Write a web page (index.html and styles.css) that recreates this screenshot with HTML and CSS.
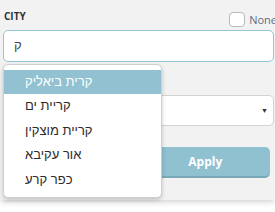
FILE: index.html
```html
<!DOCTYPE html>
<html>
<head>
<meta charset="utf-8">
<link rel="stylesheet" href="styles.css">
</head>
<body>
<div class="panel">
  <div class="header">
    <span class="label">CITY</span>
    <label class="none"><span class="box"></span><span class="none-text">None</span></label>
  </div>
  <div class="input">ק</div>
  <div class="spacer"></div>
  <div class="select"><span class="arrow">▼</span></div>
  <div class="buttons">
    <div class="btn"></div>
    <div class="btn">Apply</div>
  </div>
  <ul class="menu">
    <li class="item active">קרית ביאליק</li>
    <li class="item">קריית ים</li>
    <li class="item">קריית מוצקין</li>
    <li class="item">אור עקיבא</li>
    <li class="item">כפר קרע</li>
  </ul>
</div>
</body>
</html>
```
FILE: styles.css
```css
html, body { margin: 0; padding: 0; background: #ffffff; }
body { width: 275px; height: 212px; overflow: hidden; }
.panel {
  position: relative;
  background: #f2f2f2;
  height: 200px;
  box-sizing: border-box;
  padding: 12px 1px 0 3px;
  box-shadow: 0 2px 6px rgba(0,0,0,0.18);
  font-family: "Open Sans", "Liberation Sans", sans-serif;
}
.header {
  display: flex;
  justify-content: space-between;
  align-items: flex-start;
  height: 15px;
  margin-bottom: 3px;
}
.label {
  font-size: 10px;
  font-weight: 700;
  color: #2f3235;
  line-height: 12px;
  margin-top: -2px;
  padding-left: 1px;
}
.none { display: flex; align-items: center; gap: 4px; height: 15px; margin-right: -3px; }
.box {
  width: 14px; height: 13px;
  border: 1px solid #b9b9b9;
  border-radius: 4px;
  background: #fff;
}
.none-text { font-size: 11px; color: #5b6e7e; line-height: 15px; }
.input {
  height: 30px;
  border: 1px solid #93c6d6;
  border-radius: 5px;
  background: #fff;
  box-sizing: content-box;
  padding-left: 10px;
  font-family: "Liberation Sans", sans-serif;
  font-size: 13px;
  line-height: 30px;
  color: #444;
}
.spacer { height: 33px; }
.select {
  height: 29px;
  border: 1px solid #d3d3d3;
  border-radius: 5px;
  background: #fff;
  display: flex;
  justify-content: flex-end;
  align-items: center;
  padding-right: 5px;
}
.arrow { font-size: 7px; color: #333; }
.buttons {
  display: grid;
  grid-template-columns: 1fr 1fr;
  gap: 8px;
  margin-top: 21px;
  margin-right: 4px;
}
.btn {
  height: 29px;
  background: #90c1d1;
  border-bottom: 2px solid #79a9b9;
  border-radius: 5px;
  color: #fff;
  font-weight: 700;
  font-size: 12px;
  line-height: 29px;
  text-align: center;
}
.menu {
  position: absolute;
  left: 3px;
  top: 64px;
  width: 157px;
  height: 127px;
  margin: 0;
  padding: 5px 0 0 0;
  list-style: none;
  background: #fff;
  border: 1px solid #d0d0d0;
  border-radius: 5px;
  box-shadow: 0 2px 4px rgba(0,0,0,0.2);
  font-family: "Liberation Sans", sans-serif;
}
.item {
  height: 24.4px;
  line-height: 24px;
  padding-left: 21px;
  font-size: 13px;
  color: #2b2b2b;
  direction: ltr;
  text-align: left;
}
.item.active { background: #92c1d1; color: #fff; }
```
